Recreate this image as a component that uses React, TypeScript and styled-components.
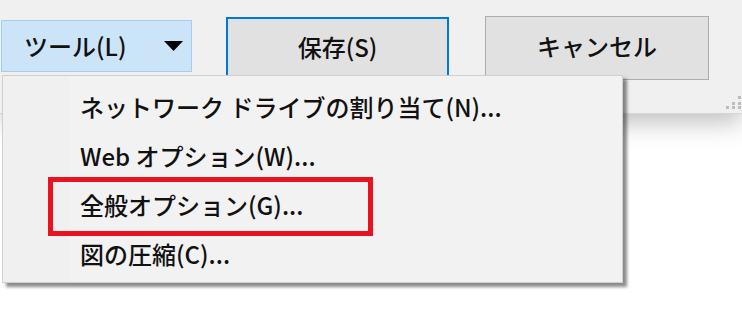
import React from "react";
import styled, { createGlobalStyle } from "styled-components";

const GlobalStyle = createGlobalStyle`
  html, body {
    margin: 0;
    padding: 0;
    background: #ffffff;
  }
  body {
    font-family: "Noto Sans CJK JP", "Noto Sans", sans-serif;
    font-weight: 500;
    color: #111;
  }
`;

const Page = styled.div`
  position: relative;
  width: 742px;
  height: 326px;
  overflow: hidden;
  background: #ffffff;
`;

const Dialog = styled.div`
  position: relative;
  height: 113px;
  background: #f0f0f0;
  border-bottom: 1px solid #d6d6d6;
  box-shadow: 0 8px 24px rgba(0, 0, 0, 0.26);
`;

const ButtonRow = styled.div`
  display: flex;
  align-items: flex-start;
  padding: 16px 0 0 1px;
`;

const ToolsButton = styled.div`
  display: flex;
  align-items: center;
  justify-content: space-between;
  box-sizing: border-box;
  width: 191px;
  height: 52px;
  margin-top: 4px;
  padding: 0 8px 0 22px;
  background: #cce4f7;
  border: 1px solid #a4cdef;
  font-size: 24px;
  line-height: 1;
`;

const PushButton = styled.div<{ $focused?: boolean; $gap: number }>`
  display: flex;
  align-items: center;
  justify-content: center;
  box-sizing: border-box;
  width: ${(p) => (p.$focused ? 223 : 224)}px;
  height: 64px;
  margin-left: ${(p) => p.$gap}px;
  margin-top: ${(p) => (p.$focused ? 1 : 0)}px;
  padding-bottom: 4px;
  background: #e1e1e1;
  border: ${(p) => (p.$focused ? "2px solid #0078d7" : "1px solid #adadad")};
  font-size: 24px;
  line-height: 1;
`;

const Grip = styled.svg`
  position: absolute;
  right: 0;
  bottom: 4px;
`;

const Menu = styled.div`
  position: absolute;
  left: 2px;
  top: 75px;
  box-sizing: border-box;
  width: 621px;
  height: 208px;
  padding-top: 6px;
  background: linear-gradient(to right, #f0f0f0 0, #f0f0f0 66px, #f2f2f2 66px);
  border: 1px solid #cfcfcf;
  box-shadow: 4px 4px 3px rgba(0, 0, 0, 0.45);
`;

const MenuItem = styled.div<{ $marked?: boolean }>`
  position: relative;
  display: flex;
  align-items: center;
  height: 49px;
  padding-left: 77px;
  font-size: 24px;
  line-height: 1;
  white-space: nowrap;

  ${(p) =>
    p.$marked &&
    `
    &::after {
      content: "";
      position: absolute;
      left: 45px;
      top: -3px;
      width: 325px;
      height: 59px;
      box-sizing: border-box;
      border: 5px solid #e8131f;
    }
  `}
`;

const items = [
  { label: "ネットワーク ドライブの割り当て(N)..." },
  { label: "Web オプション(W)..." },
  { label: "全般オプション(G)...", marked: true },
  { label: "図の圧縮(C)..." },
];

const GripDots = () => {
  const dots = [
    [15, 1],
    [9, 7],
    [15, 7],
    [3, 11],
    [9, 11],
    [15, 11],
  ];
  return (
    <Grip width="19" height="14" viewBox="0 0 19 14">
      {dots.map(([x, y], i) => (
        <rect key={i} x={x} y={y} width="3" height="3" fill="#bdbdbd" />
      ))}
    </Grip>
  );
};

export default function App() {
  return (
    <Page>
      <GlobalStyle />
      <Dialog>
        <ButtonRow>
          <ToolsButton>
            <span>ツール(L)</span>
            <svg width="19" height="11" viewBox="0 0 19 11">
              <polygon points="0,0 19,0 9.5,10" fill="#000" />
            </svg>
          </ToolsButton>
          <PushButton $focused $gap={34}>
            保存(S)
          </PushButton>
          <PushButton $gap={36}>キャンセル</PushButton>
        </ButtonRow>
        <GripDots />
      </Dialog>
      <Menu>
        {items.map((it) => (
          <MenuItem key={it.label} $marked={it.marked}>
            {it.label}
          </MenuItem>
        ))}
      </Menu>
    </Page>
  );
}
